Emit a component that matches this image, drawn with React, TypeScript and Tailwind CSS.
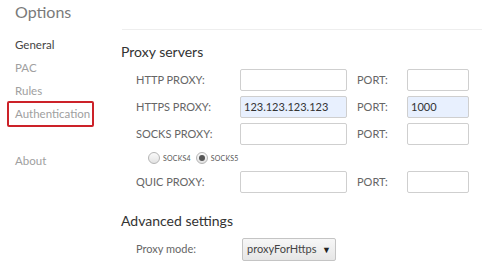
import React from 'react';

const NAV = ['General', 'PAC', 'Rules', 'Authentication'];

function Field({ value = '', wide = true }: { value?: string; wide?: boolean }) {
  return (
    <div
      className={`h-[22px] border border-[#cfcfcf] rounded-[2px] flex items-center px-[3px] text-[11px] text-[#333] ${
        value ? 'bg-[#e8f0fe]' : 'bg-white'
      } ${wide ? 'w-[107px]' : 'w-[62px]'}`}
    >
      {value}
    </div>
  );
}

function ProxyRow({ label, host, port }: { label: string; host?: string; port?: string }) {
  return (
    <div className="flex items-center h-[22px]">
      <span className="w-[119px] pl-[15px] text-[11px] text-[#666]">{label}</span>
      <Field value={host} />
      <span className="w-[50px] ml-[10px] text-[11px] text-[#666]">PORT:</span>
      <Field value={port} wide={false} />
    </div>
  );
}

function Radio({ checked, label }: { checked?: boolean; label: string }) {
  return (
    <span className="flex items-center gap-[3px]">
      <span className="w-[12px] h-[12px] rounded-full border border-[#b5b5b5] bg-gradient-to-b from-[#fafafa] to-[#e3e3e3] flex items-center justify-center">
        {checked && <span className="w-[6px] h-[6px] rounded-full bg-[#555]" />}
      </span>
      <span className="text-[7px] text-[#555] tracking-[0.2px]">{label}</span>
    </span>
  );
}

export default function App() {
  return (
    <div className="w-[482px] h-[272px] bg-white flex overflow-hidden" style={{ fontFamily: 'Lato, "Noto Sans", sans-serif' }}>
      {/* sidebar */}
      <aside className="w-[121px] shrink-0 pl-[15px]">
        <div className="pt-[2px] h-[22px] text-[16px] leading-[20px] text-[#7a7a7a]">Options</div>
        <nav className="mt-[11px] text-[11.5px]">
          {NAV.map((item, i) => (
            <div key={item} className="relative h-[23px] flex items-center">
              <span className={i === 0 ? 'text-[#444]' : 'text-[#a0a0a0]'}>{item}</span>
              {item === 'Authentication' && (
                <span className="absolute left-[-8px] top-[-1px] w-[87px] h-[26px] border-2 border-[#cc2229] rounded-[2px]" />
              )}
            </div>
          ))}
          <div className="h-[23px] mt-[24px] flex items-center text-[#a0a0a0]">About</div>
        </nav>
      </aside>

      {/* content */}
      <main className="flex-1">
        <div className="h-[30px] border-b border-[#eeeeee] ml-[1px]" />
        <h2 className="mt-[12px] text-[14px] leading-[20px] text-[#333]">Proxy servers</h2>
        <div className="mt-[7px] flex flex-col gap-[5px]">
          <ProxyRow label="HTTP PROXY:" />
          <ProxyRow label="HTTPS PROXY:" host="123.123.123.123" port="1000" />
          <ProxyRow label="SOCKS PROXY:" />
        </div>
        <div className="h-[26px] flex items-center gap-[5px] pl-[27px]">
          <Radio label="SOCKS4" />
          <Radio checked label="SOCKS5" />
        </div>
        <ProxyRow label="QUIC PROXY:" />

        <h2 className="mt-[18px] text-[14px] leading-[20px] text-[#333]">Advanced settings</h2>
        <div className="mt-[7px] flex items-center h-[23px]">
          <span className="w-[121px] pl-[15px] text-[11px] text-[#666]">Proxy mode:</span>
          <div className="h-[23px] w-[94px] border border-[#c4c4c4] rounded-[2px] bg-gradient-to-b from-[#f7f7f7] to-[#e6e6e6] flex items-center justify-between px-[4px] text-[11px] text-[#444]">
            <span>proxyForHttps</span>
            <span className="text-[9px] text-[#222]">▼</span>
          </div>
        </div>
      </main>
    </div>
  );
}
